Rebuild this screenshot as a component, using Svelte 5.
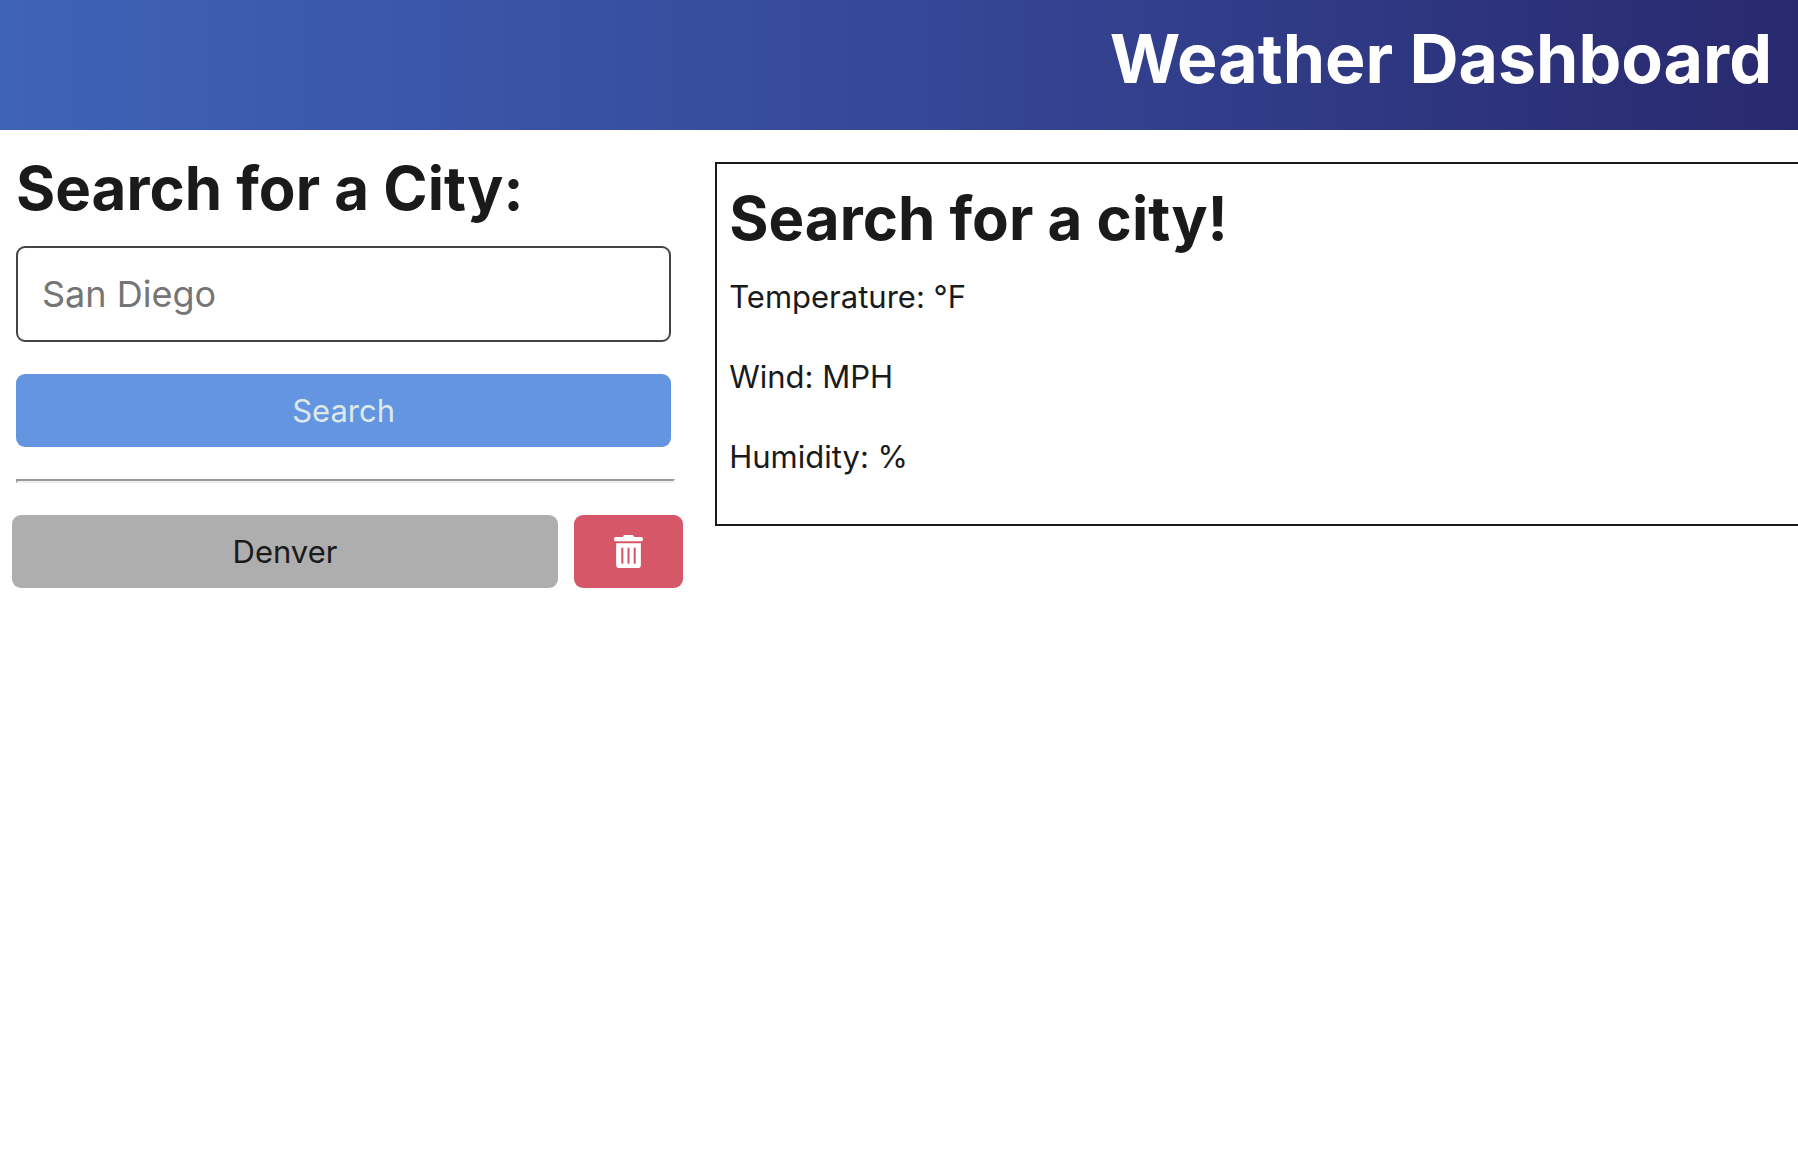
<script>
  let city = $state('');
  const history = ['Denver'];
</script>

<header>
  <h1>Weather Dashboard</h1>
</header>

<main>
  <aside>
    <form onsubmit={(e) => e.preventDefault()}>
      <label for="city">Search for a City:</label>
      <input id="city" type="text" placeholder="San Diego" bind:value={city} />
      <button class="search" type="submit">Search</button>
    </form>
    <hr />
    {#each history as name}
      <div class="entry">
        <button class="past" type="button">{name}</button>
        <button class="remove" type="button" aria-label="Delete {name}">
          <svg viewBox="0 0 28 32" width="29" height="33" aria-hidden="true">
            <path
              fill="#fff"
              fill-rule="evenodd"
              d="M1.500 2H8.500Q9 0 10.500 0H17.500Q19 0 19.500 2H26.500Q28 2 28 3.500V4.500Q28 6 26.500 6H1.500Q0 6 0 4.500V3.500Q0 2 1.500 2ZM2 8H26V29Q26 32 23 32H5Q2 32 2 29ZM8 12Q7 12 7 13V27Q7 28 8 28Q9 28 9 27V13Q9 12 8 12ZM14 12Q13 12 13 13V27Q13 28 14 28Q15 28 15 27V13Q15 12 14 12ZM20 12Q19 12 19 13V27Q19 28 20 28Q21 28 21 27V13Q21 12 20 12Z"
            />
          </svg>
        </button>
      </div>
    {/each}
  </aside>

  <section>
    <h2>Search for a city!</h2>
    <p>Temperature: °F</p>
    <p>Wind: MPH</p>
    <p>Humidity: %</p>
  </section>
</main>

<style>
  :global(body) {
    margin: 0;
    background: #fff;
    color: #1a1a1a;
    font-family: Inter, 'Liberation Sans', sans-serif;
    font-size: 31px;
    line-height: 40px;
  }

  header {
    padding: 18px 26px 32px;
    background: linear-gradient(90deg, #3f63b7, #344594 55%, #29296e);
    text-align: right;
  }

  h1,
  h2,
  p {
    margin: 0;
  }

  h1 {
    color: #fff;
    font-size: 68px;
    line-height: 80px;
  }

  main {
    display: grid;
    grid-template-columns: 38% 1fr;
    column-gap: 32px;
    align-items: start;
    padding-top: 32px;
  }

  aside {
    padding-left: 12px;
  }

  form {
    display: flex;
    flex-direction: column;
    margin: 0 12px 32px 4px;
  }

  label,
  h2 {
    font-size: 60px;
    font-weight: 700;
    line-height: 52px;
  }

  input {
    height: 96px;
    margin: 32px 0;
    padding: 0 24px;
    box-sizing: border-box;
    border: 2px solid #444;
    border-radius: 9px;
    background: #fff;
    color: #1a1a1a;
    font: inherit;
    font-size: 36px;
  }

  input::placeholder {
    color: #757575;
  }

  button {
    height: 73px;
    padding: 0;
    border: 0;
    border-radius: 9px;
    color: #1a1a1a;
    font: inherit;
  }

  .search {
    background: #6495e0;
    color: #dce9e8;
  }

  hr {
    height: 0;
    margin: 0 8px 32px 4px;
    border: 2px solid;
    border-color: #9a9a9a #eee #eee #9a9a9a;
  }

  .entry {
    display: grid;
    grid-template-columns: 5fr 1fr;
    gap: 16px;
  }

  .past {
    background: #aeaeae;
  }

  .remove {
    display: flex;
    align-items: center;
    justify-content: center;
    background: #d65767;
  }

  section {
    padding: 28px 12px 47px;
    border: 2px solid #1a1a1a;
    border-right: 0;
  }

  h2 {
    margin-bottom: 33px;
  }

  p + p {
    margin-top: 40px;
  }
</style>
